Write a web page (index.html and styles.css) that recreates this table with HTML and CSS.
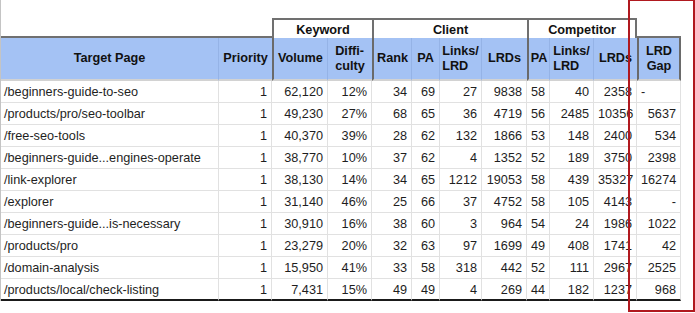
FILE: index.html
```html
<!DOCTYPE html>
<html lang="en">
<head>
<meta charset="utf-8">
<title>Target pages – LRD gap</title>
<link rel="stylesheet" href="styles.css">
</head>
<body>
<div class="frame">
  <div class="sheet">
    <div class="g-blank g-lead"></div>
    <div class="grp kw">Keyword</div>
    <div class="grp cl">Client</div>
    <div class="grp cp">Competitor</div>
    <div class="g-blank g-tail"></div>

    <div class="hd">Target Page</div>
    <div class="hd nr">Priority</div>
    <div class="hd thick">Volume</div>
    <div class="hd nr"><span class="wrap">Diffi-<br>culty</span></div>
    <div class="hd thick">Rank</div>
    <div class="hd">PA</div>
    <div class="hd"><span class="wrap">Links/<br>LRD</span></div>
    <div class="hd nr">LRDs</div>
    <div class="hd thick">PA</div>
    <div class="hd"><span class="wrap">Links/<br>LRD</span></div>
    <div class="hd nr">LRDs</div>
    <div class="hd thick gap">LRD<br>Gap</div>

    <div class="c t">/beginners-guide-to-seo</div><div class="c">1</div><div class="c">62,120</div><div class="c">12%</div><div class="c">34</div><div class="c">69</div><div class="c">27</div><div class="c">9838</div><div class="c">58</div><div class="c">40</div><div class="c">2358</div><div class="c l">-</div>
    <div class="c t">/products/pro/seo-toolbar</div><div class="c">1</div><div class="c">49,230</div><div class="c">27%</div><div class="c">68</div><div class="c">65</div><div class="c">36</div><div class="c">4719</div><div class="c">56</div><div class="c">2485</div><div class="c">10356</div><div class="c">5637</div>
    <div class="c t">/free-seo-tools</div><div class="c">1</div><div class="c">40,370</div><div class="c">39%</div><div class="c">28</div><div class="c">62</div><div class="c">132</div><div class="c">1866</div><div class="c">53</div><div class="c">148</div><div class="c">2400</div><div class="c">534</div>
    <div class="c t">/beginners-guide...engines-operate</div><div class="c">1</div><div class="c">38,770</div><div class="c">10%</div><div class="c">37</div><div class="c">62</div><div class="c">4</div><div class="c">1352</div><div class="c">52</div><div class="c">189</div><div class="c">3750</div><div class="c">2398</div>
    <div class="c t">/link-explorer</div><div class="c">1</div><div class="c">38,130</div><div class="c">14%</div><div class="c">34</div><div class="c">65</div><div class="c">1212</div><div class="c">19053</div><div class="c">58</div><div class="c">439</div><div class="c">35327</div><div class="c">16274</div>
    <div class="c t">/explorer</div><div class="c">1</div><div class="c">31,140</div><div class="c">46%</div><div class="c">25</div><div class="c">66</div><div class="c">37</div><div class="c">4752</div><div class="c">58</div><div class="c">105</div><div class="c">4143</div><div class="c">-</div>
    <div class="c t">/beginners-guide...is-necessary</div><div class="c">1</div><div class="c">30,910</div><div class="c">16%</div><div class="c">38</div><div class="c">60</div><div class="c">3</div><div class="c">964</div><div class="c">54</div><div class="c">24</div><div class="c">1986</div><div class="c">1022</div>
    <div class="c t">/products/pro</div><div class="c">1</div><div class="c">23,279</div><div class="c">20%</div><div class="c">32</div><div class="c">63</div><div class="c">97</div><div class="c">1699</div><div class="c">49</div><div class="c">408</div><div class="c">1741</div><div class="c">42</div>
    <div class="c t">/domain-analysis</div><div class="c">1</div><div class="c">15,950</div><div class="c">41%</div><div class="c">33</div><div class="c">58</div><div class="c">318</div><div class="c">442</div><div class="c">52</div><div class="c">111</div><div class="c">2967</div><div class="c">2525</div>
    <div class="c t last">/products/local/check-listing</div><div class="c last">1</div><div class="c last">7,431</div><div class="c last">15%</div><div class="c last">49</div><div class="c last">49</div><div class="c last">4</div><div class="c last">269</div><div class="c last">44</div><div class="c last">182</div><div class="c last">1237</div><div class="c last">968</div>
  </div>
  <div class="highlight"></div>
</div>
</body>
</html>
```

FILE: styles.css
```css
html, body {
  margin: 0;
  padding: 0;
  background: #ffffff;
}

body {
  width: 695px;
  height: 313px;
  overflow: hidden;
  font-family: "Liberation Sans", Arial, sans-serif;
  font-size: 12.7px;
  color: #1e1e1e;
}

.frame {
  position: relative;
  width: 694px;
  height: 313px;
}

.sheet {
  display: grid;
  width: 681px;
  box-sizing: border-box;
  padding-top: 18px;
  border-left: 1px solid #c4c4c4;
  grid-template-columns: 218px 53px 56px 44px 40px 28px 42px 45px 23px 44px 43px 44px;
  grid-template-rows: 20px 43px repeat(10, 22px);
}

.sheet > div {
  box-sizing: border-box;
}

/* group header row */
.g-blank {
  border-bottom: 2px solid #707070;
}
.g-lead { grid-column: span 2; }
.g-tail { grid-column: span 1; }

.grp {
  display: flex;
  align-items: center;
  justify-content: center;
  font-weight: bold;
  color: #111111;
  border-top: 2px solid #707070;
  border-left: 2px solid #707070;
  padding-top: 1px;
}
.kw { grid-column: span 2; }
.cl { grid-column: span 4; }
.cp {
  grid-column: span 3;
  border-right: 2px solid #707070;
}

/* column header row */
.hd {
  display: flex;
  align-items: center;
  justify-content: center;
  text-align: center;
  background: #a4c2f4;
  font-weight: bold;
  color: #111111;
  line-height: 15px;
  border-right: 1px solid #95b3e6;
  border-bottom: 2px solid #d2d2d2;
}
.hd.nr { border-right: none; }
.hd.thick { border-left: 2px solid #6a6a6a; }
.hd.gap {
  border-right: 2px solid #6a6a6a;
}
.wrap {
  display: inline-block;
  text-align: left;
}

/* data cells */
.c {
  text-align: right;
  padding: 1px 4px 0 4px;
  line-height: 20px;
  white-space: nowrap;
  border-right: 1px solid #e1e1e1;
  border-bottom: 1px solid #e1e1e1;
}
.c.t {
  text-align: left;
  padding-left: 3px;
}
.c.l { text-align: left; }
.c.last {
  border-bottom: 2px solid #1a1a1a;
}

/* annotation overlay */
.highlight {
  position: absolute;
  left: 628px;
  top: 0;
  width: 67px;
  height: 312px;
  box-sizing: border-box;
  border: 2px solid #b0191f;
  border-top-width: 1px;
  pointer-events: none;
}
```
